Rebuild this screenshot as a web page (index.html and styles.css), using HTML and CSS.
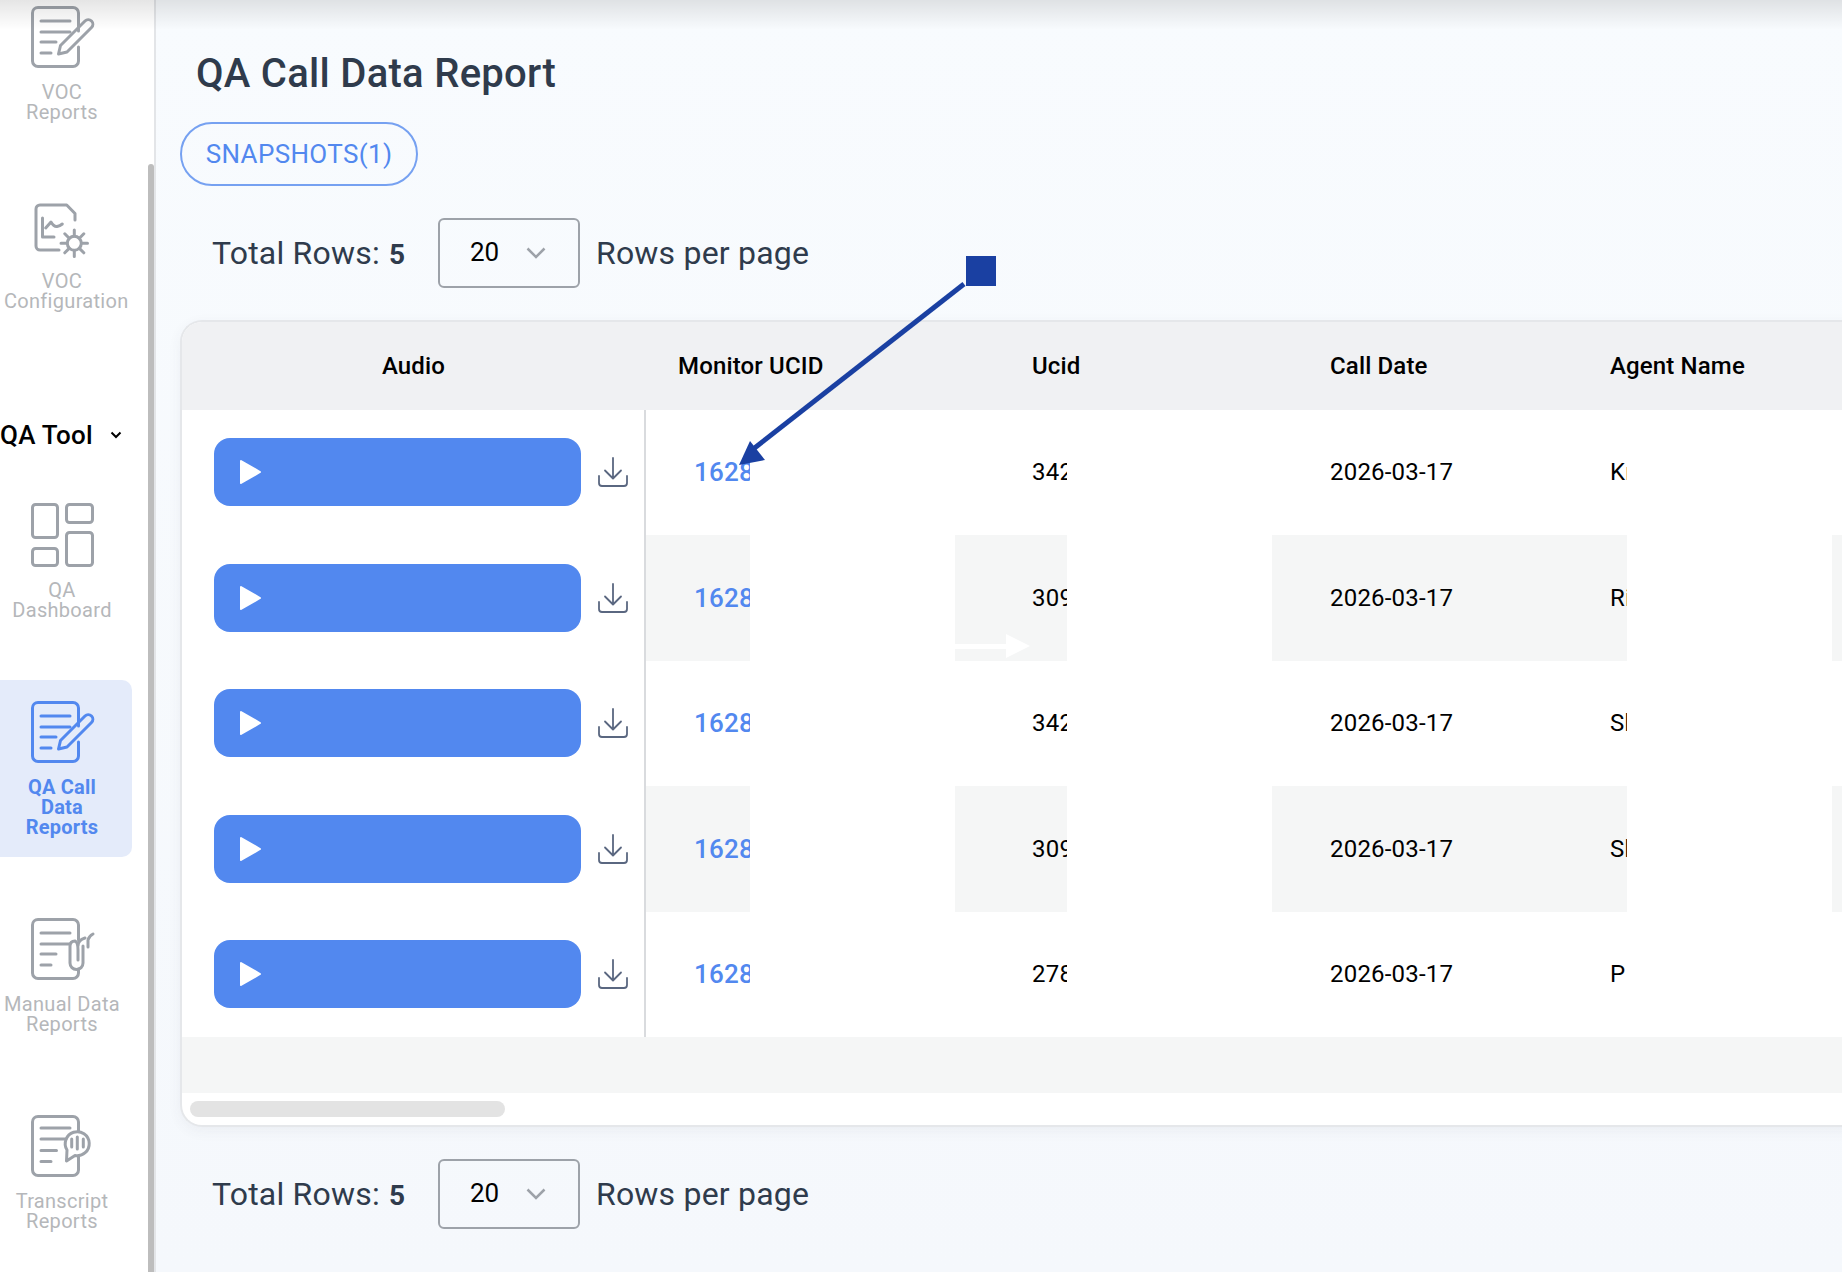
FILE: index.html
```html
<!DOCTYPE html>
<html lang="en">
<head>
<meta charset="utf-8">
<title>QA Call Data Report</title>
<link rel="stylesheet" href="styles.css">
</head>
<body>
<div class="app">
  <aside class="sidebar">
    <nav class="nav">
      <a class="nav-item">
        <svg class="nav-icon" viewBox="0 0 72 72"><path d="M52.500 27V9A5.500 5.500 0 0 0 47 3.500H12A5.500 5.500 0 0 0 6.500 9V57A5.500 5.500 0 0 0 12 62.500H47A5.500 5.500 0 0 0 52.500 57V43"/><path d="M15 17H44M15 28H44M15 38H30M15 49H25"/><path d="M59 17a4.500 4.500 0 0 1 6.500 6.500L41 48l-8.500 2 2-8.500Z"/></svg>
        <span class="nav-label">VOC Reports</span>
      </a>
      <a class="nav-item gap-32">
        <svg class="nav-icon" viewBox="0 0 72 72"><path d="M49 27V20.500L40.700 12H14A4 4 0 0 0 10 16V53A4 4 0 0 0 14 57H33"/><path d="M16.500 25V44H28"/><path d="M19.700 35L25 29Q28 34 31 33.500T36.300 31"/><circle cx="48.300" cy="50.300" r="7"/><path d="M48.300 37V43M48.300 57.500V63.500M35 50.300H41M55.500 50.300H61.500M38.800 40.800L43.200 45.200M53.400 55.400L57.800 59.800M57.800 40.800L53.400 45.200M43.200 55.400L38.800 59.800"/></svg>
        <span class="nav-label">VOC Configuration</span>
      </a>
      <div class="nav-group">
        <span>QA Tool</span>
        <svg class="group-chevron" viewBox="0 0 12 8"><path d="M1.500 1.500L6 6l4.500-4.500"/></svg>
      </div>
      <a class="nav-item gap-28">
        <svg class="nav-icon" viewBox="0 0 72 72"><rect x="6.500" y="2.500" width="25" height="33" rx="3"/><rect x="40.500" y="2.500" width="26" height="18" rx="3"/><rect x="6.500" y="46.500" width="25" height="17" rx="3"/><rect x="40.500" y="30.500" width="26" height="33" rx="3"/></svg>
        <span class="nav-label">QA Dashboard</span>
      </a>
      <a class="nav-item nav-item-active gap-40">
        <svg class="nav-icon" viewBox="0 0 72 72"><path d="M52.500 27V9A5.500 5.500 0 0 0 47 3.500H12A5.500 5.500 0 0 0 6.500 9V57A5.500 5.500 0 0 0 12 62.500H47A5.500 5.500 0 0 0 52.500 57V43"/><path d="M15 17H44M15 28H44M15 38H30M15 49H25"/><path d="M59 17a4.500 4.500 0 0 1 6.500 6.500L41 48l-8.500 2 2-8.500Z"/></svg>
        <span class="nav-label">QA Call Data Reports</span>
      </a>
      <a class="nav-item gap-40">
        <svg class="nav-icon" viewBox="0 0 72 72"><path d="M52.500 24V9A5.500 5.500 0 0 0 47 3.500H12A5.500 5.500 0 0 0 6.500 9V57A5.500 5.500 0 0 0 12 62.500H47A5.500 5.500 0 0 0 52.500 57V53"/><path d="M15 17H44M15 28H44M15 38H30M15 49H25"/><path d="M44 30V47A6.500 6.500 0 0 0 57 47V30M44 30Q44 25 49 25Q52 26 52 34V44M52 30Q52 24 59 22M62 31V24Q63 20 67 18"/></svg>
        <span class="nav-label">Manual Data Reports</span>
      </a>
      <a class="nav-item gap-40">
        <svg class="nav-icon" viewBox="0 0 72 72"><path d="M52.500 18V9A5.500 5.500 0 0 0 47 3.500H12A5.500 5.500 0 0 0 6.500 9V57A5.500 5.500 0 0 0 12 62.500H47A5.500 5.500 0 0 0 52.500 57V43"/><path d="M15 15H44M15 26H40M15 37.500H30.500M15 48.500H25"/><path d="M40.500 48L41 37A12 12 0 1 1 49 42.500Z"/><path d="M45.700 26V34M51.300 24V36M57.300 26V34"/></svg>
        <span class="nav-label">Transcript Reports</span>
      </a>
    </nav>
    <div class="side-scroll"></div>
  </aside>

  <main class="main">
    <h1 class="title">QA Call Data Report</h1>
    <button class="pill">SNAPSHOTS(1)</button>

    <div class="pager pager-top">
      <span class="pager-total">Total Rows: <b>5</b></span>
      <div class="select"><span>20</span><svg class="select-chevron" viewBox="0 0 20 12"><path d="M1.500 1.500L10 10l8.500-8.500"/></svg></div>
      <span class="pager-label">Rows per page</span>
    </div>

    <section class="card">
      <div class="thead">
        <div class="th th-audio">Audio</div>
        <div class="th th-monitor">Monitor UCID</div>
        <div class="th th-ucid">Ucid</div>
        <div class="th th-date">Call Date</div>
        <div class="th th-agent">Agent Name</div>
      </div>

      <div class="row">
        <div class="audio"><div class="player"><svg class="play" viewBox="0 0 22 28"><path d="M2 3L21 14L2 25Z"/></svg></div><svg class="download" viewBox="0 0 30 30"><path d="M15 1V21M7 13.500L15 21.500L23 13.500M1 19V26A3 3 0 0 0 4 29H26A3 3 0 0 0 29 26V19"/></svg></div>
        <div class="td td-monitor"><a class="link">16280</a></div>
        <div class="td td-ucid">342</div>
        <div class="td td-date">2026-03-17</div>
        <div class="td td-agent">Kr</div>
        <div class="td td-next"></div>
      </div>
      <div class="row row-alt">
        <div class="audio"><div class="player"><svg class="play" viewBox="0 0 22 28"><path d="M2 3L21 14L2 25Z"/></svg></div><svg class="download" viewBox="0 0 30 30"><path d="M15 1V21M7 13.500L15 21.500L23 13.500M1 19V26A3 3 0 0 0 4 29H26A3 3 0 0 0 29 26V19"/></svg></div>
        <div class="td td-monitor"><a class="link">16280</a></div>
        <div class="td td-ucid">309</div>
        <div class="td td-date">2026-03-17</div>
        <div class="td td-agent">Ri</div>
        <div class="td td-next"></div>
      </div>
      <div class="row">
        <div class="audio"><div class="player"><svg class="play" viewBox="0 0 22 28"><path d="M2 3L21 14L2 25Z"/></svg></div><svg class="download" viewBox="0 0 30 30"><path d="M15 1V21M7 13.500L15 21.500L23 13.500M1 19V26A3 3 0 0 0 4 29H26A3 3 0 0 0 29 26V19"/></svg></div>
        <div class="td td-monitor"><a class="link">16280</a></div>
        <div class="td td-ucid">342</div>
        <div class="td td-date">2026-03-17</div>
        <div class="td td-agent">Sh</div>
        <div class="td td-next"></div>
      </div>
      <div class="row row-alt">
        <div class="audio"><div class="player"><svg class="play" viewBox="0 0 22 28"><path d="M2 3L21 14L2 25Z"/></svg></div><svg class="download" viewBox="0 0 30 30"><path d="M15 1V21M7 13.500L15 21.500L23 13.500M1 19V26A3 3 0 0 0 4 29H26A3 3 0 0 0 29 26V19"/></svg></div>
        <div class="td td-monitor"><a class="link">16280</a></div>
        <div class="td td-ucid">309</div>
        <div class="td td-date">2026-03-17</div>
        <div class="td td-agent">Sh</div>
        <div class="td td-next"></div>
      </div>
      <div class="row">
        <div class="audio"><div class="player"><svg class="play" viewBox="0 0 22 28"><path d="M2 3L21 14L2 25Z"/></svg></div><svg class="download" viewBox="0 0 30 30"><path d="M15 1V21M7 13.500L15 21.500L23 13.500M1 19V26A3 3 0 0 0 4 29H26A3 3 0 0 0 29 26V19"/></svg></div>
        <div class="td td-monitor"><a class="link">16280</a></div>
        <div class="td td-ucid">278</div>
        <div class="td td-date">2026-03-17</div>
        <div class="td td-agent">P</div>
        <div class="td td-next"></div>
      </div>

      <div class="tfoot"></div>
      <div class="hscroll"><div class="hscroll-thumb"></div></div>
    </section>

    <div class="pager pager-bottom">
      <span class="pager-total">Total Rows: <b>5</b></span>
      <div class="select"><span>20</span><svg class="select-chevron" viewBox="0 0 20 12"><path d="M1.500 1.500L10 10l8.500-8.500"/></svg></div>
      <span class="pager-label">Rows per page</span>
    </div>
  </main>

  <div class="top-shade"></div>
  <svg class="annotation" viewBox="0 0 1842 1272">
    <rect class="ann-blue" x="966" y="256" width="30" height="30"/>
    <path class="ann-line" d="M964 284L752 450"/>
    <path class="ann-blue" d="M739 465L750 441L765 460Z"/>
    <path class="ann-white" d="M955 644H1006V634L1030 646L1006 658V649H955Z"/>
  </svg>
</div>
</body>
</html>
```

FILE: styles.css
```css
* { box-sizing: border-box; }

html, body {
  margin: 0;
  height: 100%;
  overflow: hidden;
}

body {
  font-family: Roboto, "Liberation Sans", sans-serif;
  color: #000;
  background: #f7fafd;
}

.app {
  position: relative;
  display: flex;
  width: 1842px;
  height: 1272px;
  overflow: hidden;
}

/* Sidebar */
.sidebar {
  position: relative;
  flex: 0 0 156px;
  background: #fff;
  border-right: 2px solid #e3e5e8;
  overflow: hidden;
}

.nav {
  display: flex;
  flex-direction: column;
  margin-top: -15px;
  width: 132px;
}

.nav-item {
  display: flex;
  flex-direction: column;
  align-items: stretch;
  padding: 19px 12px 20px 4px;
  border-radius: 0 10px 10px 0;
  color: #b5b7ba;
}

.gap-32 { margin-top: 32px; }
.gap-28 { margin-top: 28px; }
.gap-40 { margin-top: 40px; }

.nav-icon {
  display: block;
  width: 72px;
  height: 72px;
  margin: 0 0 6px 22px;
  flex: none;
  fill: none;
  stroke: #9da2a9;
  stroke-width: 3;
  stroke-linecap: round;
  stroke-linejoin: round;
}

.nav-label {
  display: block;
  font-size: 20px;
  line-height: 20px;
  letter-spacing: 0.3px;
  text-align: center;
}

.nav-item-active {
  background: #e4ebfa;
  color: #5288ef;
}

.nav-item-active .nav-icon { stroke: #5288ef; }

.nav-item-active .nav-label {
  padding: 0 10px;
  font-weight: 700;
  letter-spacing: 0.2px;
}

.nav-group {
  display: flex;
  align-items: center;
  gap: 17px;
  height: 40px;
  margin-top: 84px;
  font-size: 26px;
  font-weight: 500;
  letter-spacing: 0.25px;
  white-space: nowrap;
}

.group-chevron {
  width: 12px;
  height: 8px;
  fill: none;
  stroke: #000;
  stroke-width: 2;
}

.side-scroll {
  position: absolute;
  top: 164px;
  right: 0;
  bottom: 0;
  width: 6px;
  border-radius: 3px 3px 0 0;
  background: #bdbdbd;
}

/* Main */
.main {
  flex: 1;
  min-width: 0;
  padding: 0 0 0 24px;
  overflow: hidden;
  background: linear-gradient(#f8fbfe, #f5f8fc);
}

.title {
  margin: 52px 0 0 16px;
  font-size: 40px;
  line-height: 44px;
  font-weight: 500;
  color: #2f3b4c;
  letter-spacing: 0.28px;
}

.pill {
  display: block;
  width: 238px;
  height: 64px;
  margin: 26px 0 0;
  padding: 0;
  border: 2px solid #76a1f1;
  border-radius: 32px;
  background: transparent;
  color: #5288ef;
  font: 400 26px Roboto, sans-serif;
  letter-spacing: 0.35px;
}

.pager {
  display: flex;
  align-items: center;
  margin-left: 32px;
  font-size: 32px;
  color: #2f3b4c;
  letter-spacing: 0.2px;
}

.pager-top { margin-top: 32px; }
.pager-bottom { margin-top: 32px; }

.pager-total {
  width: 226px;
  white-space: nowrap;
}

.pager-total b {
  margin-left: 1px;
  font-size: 28px;
  font-weight: 700;
}

.select {
  display: flex;
  align-items: center;
  justify-content: space-between;
  width: 142px;
  height: 70px;
  padding: 0 32px 0 30px;
  border: 2px solid #9da2a9;
  border-radius: 6px;
  font-size: 26px;
  color: #000;
  letter-spacing: 0;
}

.select span { margin-top: -2px; }

.select-chevron {
  width: 20px;
  height: 12px;
  fill: none;
  stroke: #9da2a9;
  stroke-width: 2.500;
}

.pager-label { margin-left: 16px; }

/* Table */
.card {
  width: 1800px;
  height: 807px;
  margin-top: 32px;
  border: 2px solid #e5e7ea;
  border-right: 0;
  border-radius: 22px 0 0 22px;
  background: #fff;
  overflow: hidden;
  box-shadow: 0 4px 14px rgba(60, 70, 90, 0.06);
}

.thead {
  display: flex;
  height: 87.500px;
  align-items: center;
  background: #f0f1f3;
  font-size: 24px;
  font-weight: 500;
  letter-spacing: 0.15px;
}

.th { flex: none; white-space: nowrap; }
.th-audio { width: 463px; text-align: center; }
.th-monitor { width: 387px; padding-left: 33px; }
.th-ucid { width: 298px; }
.th-date { width: 280px; }
.th-agent { width: 300px; }

.row {
  display: flex;
  height: 125.500px;
  font-size: 24px;
  letter-spacing: 0.2px;
}

.audio {
  display: flex;
  flex: none;
  align-items: center;
  width: 464px;
  padding-left: 32px;
  border-right: 2px solid #d9dbde;
  background: #fff;
}

.player {
  display: flex;
  align-items: center;
  width: 367px;
  height: 68px;
  padding-left: 25px;
  border-radius: 16px;
  background: #5288ef;
}

.play {
  width: 22px;
  height: 28px;
  fill: #fff;
  stroke: #fff;
  stroke-width: 2;
  stroke-linejoin: round;
}

.download {
  width: 30px;
  height: 30px;
  margin-left: 17px;
  fill: none;
  stroke: #5a6780;
  stroke-width: 1.800;
  stroke-linecap: round;
  stroke-linejoin: round;
}

.td {
  display: flex;
  flex: none;
  align-items: center;
  overflow: hidden;
  white-space: nowrap;
}

.row-alt .td { background: #f5f6f6; }

.td-monitor { width: 104px; margin-right: 205px; padding-left: 48px; }
.td-ucid { width: 112px; margin-right: 205px; padding-left: 77px; }
.td-date { width: 338px; padding-left: 58px; }
.td-agent { width: 17px; margin-right: 205px; }
.td-next { width: 100px; }

.link {
  color: #5288ef;
  font-size: 26px;
  font-weight: 500;
}

.tfoot {
  height: 56px;
  background: #f5f6f6;
}

.hscroll { padding: 8px 0 0 8px; }

.hscroll-thumb {
  width: 315px;
  height: 16px;
  border-radius: 8px;
  background: #e3e3e3;
}

/* Overlays */
.top-shade {
  position: absolute;
  top: 0;
  left: 0;
  right: 0;
  height: 30px;
  background: linear-gradient(rgba(0, 0, 0, 0.1), rgba(0, 0, 0, 0));
  pointer-events: none;
}

.annotation {
  position: absolute;
  top: 0;
  left: 0;
  width: 1842px;
  height: 1272px;
  pointer-events: none;
}

.ann-blue { fill: #1a40a2; }
.ann-line { fill: none; stroke: #1a40a2; stroke-width: 5; }
.ann-white { fill: #fff; }
```
